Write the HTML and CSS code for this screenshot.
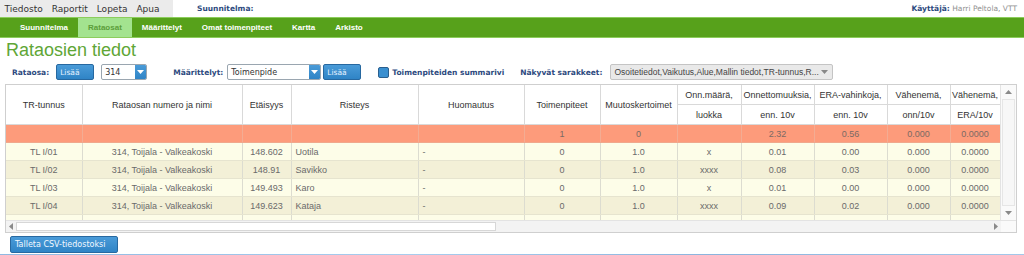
FILE: index.html
```html
<!DOCTYPE html>
<html lang="fi">
<head>
<meta charset="utf-8">
<title>Rataosien tiedot</title>
<link rel="stylesheet" href="styles.css">
</head>
<body>
<header class="topbar">
  <nav class="menu">
    <span class="menu-item">Tiedosto</span>
    <span class="menu-item">Raportit</span>
    <span class="menu-item">Lopeta</span>
    <span class="menu-item">Apua</span>
  </nav>
  <span class="plan-label">Suunnitelma:</span>
  <span class="user"><b class="user-label">Käyttäjä:</b> Harri Peltola, VTT</span>
</header>
<nav class="tabs">
  <span class="tab">Suunnitelma</span>
  <span class="tab tab-active">Rataosat</span>
  <span class="tab">Määrittelyt</span>
  <span class="tab">Omat toimenpiteet</span>
  <span class="tab">Kartta</span>
  <span class="tab">Arkisto</span>
</nav>
<h1 class="title">Rataosien tiedot</h1>
<div class="controls">
  <span class="label">Rataosa:</span>
  <span class="btn btn-add gap-s">Lisää</span>
  <span class="select select-short gap-s"><span class="select-text">314</span><span class="select-arrow"><svg width="7" height="4" viewBox="0 0 7 4"><path d="M0 0h7L3.5 4z" fill="#fff"/></svg></span></span>
  <span class="label gap-l">Määrittelyt:</span>
  <span class="select select-long gap-s3"><span class="select-text">Toimenpide</span><span class="select-arrow"><svg width="7" height="4" viewBox="0 0 7 4"><path d="M0 0h7L3.5 4z" fill="#fff"/></svg></span></span>
  <span class="btn btn-add gap-xs">Lisää</span>
  <span class="checkbox gap-m"></span>
  <span class="label gap-xs2">Toimenpiteiden summarivi</span>
  <span class="label gap-m2">Näkyvät sarakkeet:</span>
  <span class="multi gap-s2"><span class="multi-text">Osoitetiedot,Vaikutus,Alue,Mallin tiedot,TR-tunnus,R...</span><svg width="7" height="4" viewBox="0 0 7 4"><path d="M0 0h7L3.5 4z" fill="#888"/></svg></span>
</div>
<div class="grid">
  <div class="grid-body">
    <div class="viewport">
      <table class="data">
        <colgroup>
          <col style="width:76px"><col style="width:160px"><col style="width:49px"><col style="width:127px"><col style="width:106px"><col style="width:76px"><col style="width:77px"><col style="width:64px"><col style="width:73px"><col style="width:73px"><col style="width:63px"><col style="width:50px">
        </colgroup>
        <thead>
          <tr>
            <th rowspan="2">TR-tunnus</th>
            <th rowspan="2">Rataosan numero ja nimi</th>
            <th rowspan="2">Etäisyys</th>
            <th rowspan="2">Risteys</th>
            <th rowspan="2">Huomautus</th>
            <th rowspan="2">Toimenpiteet</th>
            <th rowspan="2">Muutoskertoimet</th>
            <th>Onn.määrä,</th>
            <th>Onnettomuuksia,</th>
            <th>ERA-vahinkoja,</th>
            <th>Vähenemä,</th>
            <th>Vähenemä,</th>
          </tr>
          <tr>
            <th>luokka</th>
            <th>enn. 10v</th>
            <th>enn. 10v</th>
            <th>onn/10v</th>
            <th>ERA/10v</th>
          </tr>
        </thead>
        <tbody>
          <tr class="sum">
            <td></td><td></td><td></td><td></td><td></td><td>1</td><td>0</td><td></td><td>2.32</td><td>0.56</td><td>0.000</td><td>0.0000</td>
          </tr>
          <tr class="odd">
            <td>TL I/01</td><td>314, Toijala - Valkeakoski</td><td>148.602</td><td class="left">Uotila</td><td class="left">-</td><td>0</td><td>1.0</td><td>x</td><td>0.01</td><td>0.00</td><td>0.000</td><td>0.0000</td>
          </tr>
          <tr class="even">
            <td>TL I/02</td><td>314, Toijala - Valkeakoski</td><td>148.91</td><td class="left">Savikko</td><td class="left">-</td><td>0</td><td>1.0</td><td>xxxx</td><td>0.08</td><td>0.03</td><td>0.000</td><td>0.0000</td>
          </tr>
          <tr class="odd">
            <td>TL I/03</td><td>314, Toijala - Valkeakoski</td><td>149.493</td><td class="left">Karo</td><td class="left">-</td><td>0</td><td>1.0</td><td>x</td><td>0.01</td><td>0.00</td><td>0.000</td><td>0.0000</td>
          </tr>
          <tr class="even">
            <td>TL I/04</td><td>314, Toijala - Valkeakoski</td><td>149.623</td><td class="left">Kataja</td><td class="left">-</td><td>0</td><td>1.0</td><td>xxxx</td><td>0.09</td><td>0.02</td><td>0.000</td><td>0.0000</td>
          </tr>
          <tr class="odd">
            <td></td><td></td><td></td><td></td><td></td><td></td><td></td><td></td><td></td><td></td><td></td><td></td>
          </tr>
        </tbody>
      </table>
    </div>
    <div class="vscroll">
      <span class="arrow"><svg width="7" height="4" viewBox="0 0 7 4"><path d="M0 4h7L3.5 0z" fill="#8a8a8a"/></svg></span>
      <span class="vtrack"></span>
      <span class="arrow"><svg width="7" height="4" viewBox="0 0 7 4"><path d="M0 0h7L3.5 4z" fill="#8a8a8a"/></svg></span>
    </div>
  </div>
  <div class="hscroll">
    <span class="harrow"><svg width="4" height="7" viewBox="0 0 4 7"><path d="M4 0v7L0 3.5z" fill="#8a8a8a"/></svg></span>
    <span class="htrack"><span class="hthumb"></span></span>
    <span class="harrow"><svg width="4" height="7" viewBox="0 0 4 7"><path d="M0 0v7L4 3.5z" fill="#8a8a8a"/></svg></span>
    <span class="corner"></span>
  </div>
</div>
<div class="actions">
  <span class="btn btn-save">Talleta CSV-tiedostoksi</span>
</div>
<div class="taskbar"></div>
</body>
</html>
```

FILE: styles.css
```css
html, body {
  margin: 0;
  padding: 0;
  background: #fff;
  font-family: "DejaVu Sans", Verdana, sans-serif;
  overflow: hidden;
  width: 1024px;
  height: 255px;
}

/* top menu bar */
.topbar {
  display: flex;
  align-items: center;
  height: 17px;
}
.menu {
  display: flex;
  align-items: center;
  height: 17px;
  width: 173px;
  background: #ebebeb;
}
.menu-item {
  font-size: 9px;
  color: #333;
  padding: 0 4.5px;
}
.plan-label {
  font-weight: bold;
  font-size: 7.5px;
  color: #2d4a7e;
  margin-left: 24px;
}
.user {
  margin-left: auto;
  margin-right: 7px;
  font-size: 7.5px;
  color: #8f8f8f;
}
.user-label {
  color: #2d4a7e;
}

/* green tab bar */
.tabs {
  display: flex;
  height: 19px;
  background: #57a11b;
  border-top: 1px solid #8ccd5c;
  border-bottom: 1px solid #8ccd5c;
  padding-left: 10px;
}
.tab {
  display: flex;
  align-items: center;
  padding: 0 10px;
  font-family: "Liberation Sans", Arial, sans-serif;
  font-weight: bold;
  font-size: 8px;
  color: #fff;
}
.tab-active {
  background: #a3e38f;
  color: #5c9e3b;
}

/* title */
.title {
  margin: 2px 0 0 6px;
  font-family: "Liberation Sans", Arial, sans-serif;
  font-weight: normal;
  font-size: 18px;
  line-height: 20px;
  color: #60a636;
}

/* controls row */
.controls {
  display: flex;
  align-items: center;
  height: 16px;
  margin: 4px 0 0 12px;
}
.label {
  font-weight: bold;
  font-size: 7.5px;
  color: #2d4a7e;
}
.gap-xs { margin-left: 2px; }
.gap-xs2 { margin-left: 3px; }
.gap-s { margin-left: 7px; }
.gap-s2 { margin-left: 8px; }
.gap-s3 { margin-left: 4px; }
.gap-m { margin-left: 17px; }
.gap-m2 { margin-left: 16px; }
.gap-l { margin-left: 26px; }

.btn {
  display: flex;
  align-items: center;
  box-sizing: border-box;
  background: linear-gradient(#4a9bd8, #2f84c6);
  border: 1px solid #2768a0;
  border-radius: 2px;
  color: #e6f2ff;
  font-size: 7.5px;
}
.btn-add {
  width: 38px;
  height: 16px;
  padding-left: 3px;
}
.select {
  display: flex;
  box-sizing: border-box;
  height: 16px;
  border: 1px solid #9aa6b0;
  border-radius: 2px;
  background: #fff;
  overflow: hidden;
}
.select-short { width: 46px; }
.select-long { width: 94px; }
.select-text {
  flex: 1;
  display: flex;
  align-items: center;
  padding-left: 3px;
  font-size: 8px;
  color: #333;
}
.select-arrow {
  width: 11px;
  display: flex;
  align-items: center;
  justify-content: center;
  background: linear-gradient(#4a9bd8, #2f84c6);
}
.checkbox {
  width: 11px;
  height: 11px;
  box-sizing: border-box;
  background: #3a8fd0;
  border: 1px solid #2a5f8e;
  border-radius: 2px;
}
.multi {
  display: flex;
  align-items: center;
  box-sizing: border-box;
  width: 223px;
  height: 16px;
  padding: 0 4px 0 3px;
  background: #e9e9e9;
  border: 1px solid #c4c4c4;
  border-radius: 2px;
}
.multi-text {
  flex: 1;
  font-family: "Liberation Sans", Arial, sans-serif;
  font-size: 8.5px;
  color: #444;
  white-space: nowrap;
  overflow: hidden;
}

/* data grid */
.grid {
  margin: 4px 0 0 5px;
  width: 1012px;
  border: 1px solid #cfcfcf;
  box-sizing: border-box;
}
.grid-body {
  display: flex;
  height: 135px;
}
.viewport {
  flex: 1;
  overflow: hidden;
}
.data {
  table-layout: fixed;
  width: 994px;
  border-collapse: collapse;
  font-family: "Liberation Sans", Arial, sans-serif;
  font-size: 9px;
}
.data th {
  height: 19px;
  padding: 0 1px;
  font-weight: normal;
  color: #333;
  text-align: center;
  border-right: 1px solid #d9d9d9;
  border-bottom: 1px solid #d9d9d9;
  background: #fff;
  white-space: nowrap;
  overflow: hidden;
}
.data td {
  height: 17px;
  padding: 0 4px;
  color: #6a6a6a;
  text-align: center;
  border-right: 1px solid #dcdcd0;
  border-bottom: 1px solid #e6e4cf;
  white-space: nowrap;
  overflow: hidden;
}
.data td.left {
  text-align: left;
}
.sum td {
  background: #fd9b7b;
  color: #7a6a64;
  border-right-color: #f3ac93;
  border-bottom-color: #f0a88c;
}
.odd td { background: #fdfde8; }
.even td { background: #f3f0d7; }

.vscroll {
  width: 15px;
  display: flex;
  flex-direction: column;
  border-left: 1px solid #e3e3e3;
  background: #fafafa;
}
.arrow {
  height: 14px;
  display: flex;
  align-items: center;
  justify-content: center;
}
.vtrack {
  flex: 1;
  background: #f7f7f7;
  border: 1px solid #e6e6e6;
  margin: 0 1px;
}

.hscroll {
  display: flex;
  height: 11px;
  border-top: 1px solid #e3e3e3;
  background: #f3f3f3;
}
.harrow {
  width: 10px;
  display: flex;
  align-items: center;
  justify-content: center;
}
.htrack {
  flex: 1;
  display: flex;
  padding: 1px 0;
}
.hthumb {
  width: 478px;
  background: #fff;
  border: 1px solid #d7d7d7;
}
.corner {
  width: 15px;
  background: #fafafa;
}

.actions {
  display: flex;
  margin: 3px 0 0 10px;
}
.btn-save {
  width: 108px;
  height: 17px;
  padding: 0 0 0 4px;
  font-size: 8px;
  color: #f2f8ff;
}
.taskbar {
  margin-top: 1px;
  height: 3px;
  background: linear-gradient(90deg, #8fb9e2, #a8cdee 40%, #8ab4dd 70%, #a3c8ea);
}
```
